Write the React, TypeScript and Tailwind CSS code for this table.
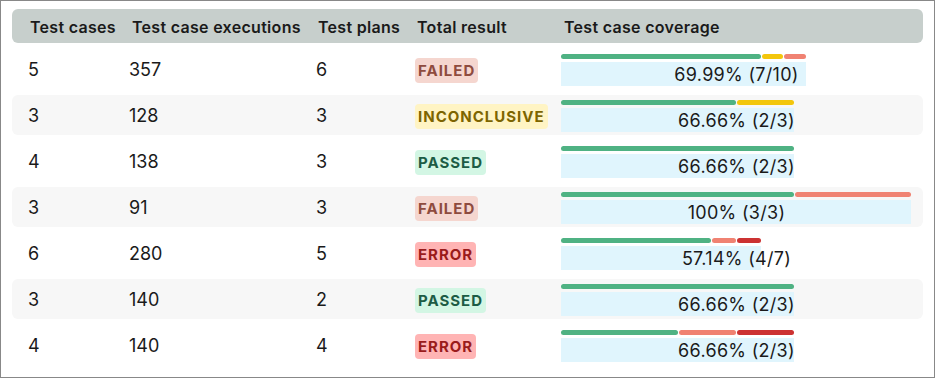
import React from 'react';

type Seg = { c: string; w: number };
type Row = { cases: number; execs: number; plans: number; result: string; pct: string; segs: Seg[] };

const G = 'bg-[#4fb283]';
const Y = 'bg-[#f3c60c]';
const S = 'bg-[#f08272]';
const R = 'bg-[#cc3232]';

const rows: Row[] = [
  { cases: 5, execs: 357, plans: 6, result: 'FAILED', pct: '69.99% (7/10)', segs: [{ c: G, w: 200 }, { c: Y, w: 21 }, { c: S, w: 22 }] },
  { cases: 3, execs: 128, plans: 3, result: 'INCONCLUSIVE', pct: '66.66% (2/3)', segs: [{ c: G, w: 175 }, { c: Y, w: 57 }] },
  { cases: 4, execs: 138, plans: 3, result: 'PASSED', pct: '66.66% (2/3)', segs: [{ c: G, w: 233 }] },
  { cases: 3, execs: 91, plans: 3, result: 'FAILED', pct: '100% (3/3)', segs: [{ c: G, w: 233 }, { c: S, w: 116 }] },
  { cases: 6, execs: 280, plans: 5, result: 'ERROR', pct: '57.14% (4/7)', segs: [{ c: G, w: 150 }, { c: S, w: 24 }, { c: R, w: 24 }] },
  { cases: 3, execs: 140, plans: 2, result: 'PASSED', pct: '66.66% (2/3)', segs: [{ c: G, w: 233 }] },
  { cases: 4, execs: 140, plans: 4, result: 'ERROR', pct: '66.66% (2/3)', segs: [{ c: G, w: 117 }, { c: S, w: 57 }, { c: R, w: 57 }] },
];

const badgeStyles: Record<string, string> = {
  FAILED: 'bg-[#f5d6cf] text-[#8e4b3e]',
  INCONCLUSIVE: 'bg-[#fff4c4] text-[#7d6500]',
  PASSED: 'bg-[#d3f6e4] text-[#1d5c45]',
  ERROR: 'bg-[#ffb4b4] text-[#9a1b1b]',
};

const cols = 'grid grid-cols-[104px_184px_99px_146px_1fr] items-center whitespace-nowrap';

const Coverage: React.FC<{ row: Row }> = ({ row }) => {
  const total = row.segs.reduce((a, s) => a + s.w, 0) + row.segs.length - 1;
  return (
    <div className="flex flex-col gap-[3px] pl-4 pr-[11px] pt-[5px] h-full">
      <div className="flex gap-px h-[5px]">
        {row.segs.map((s, i) => (
          <div key={i} className={`${s.c} h-[5px] rounded-full`} style={{ width: s.w }} />
        ))}
      </div>
      <div className="relative h-[24px]">
        <div className="absolute left-0 top-0 h-[24px] bg-[#e0f5fd]" style={{ width: total }} />
        <div className="relative text-center text-[18px] leading-[25px] tracking-[0.3px] text-[#1a1a1a]">{row.pct}</div>
      </div>
    </div>
  );
};

export default function App() {
  return (
    <div className="w-[935px] h-[378px] border border-[#888888] bg-white px-[11px] pt-[8px] [font-family:Inter,sans-serif] text-[#1a1a1a]">
      <div className={`${cols} h-[34px] rounded-md bg-[#c7cfcc] text-[16px] font-semibold tracking-[0.3px] pt-px`}>
        <div className="pl-[18px]">Test cases</div>
        <div className="pl-[16px]">Test case executions</div>
        <div className="pl-[18px]">Test plans</div>
        <div className="pl-[18px]">Total result</div>
        <div className="pl-[19px]">Test case coverage</div>
      </div>
      <div className="mt-[6px] flex flex-col gap-[6px]">
        {rows.map((r, i) => (
          <div key={i} className={`${cols} h-[40px] rounded-md text-[18px] ${i % 2 === 1 ? 'bg-[#f7f7f7]' : ''}`}>
            <div className="pl-4">{r.cases}</div>
            <div className="pl-[13px]">{r.execs}</div>
            <div className="pl-4">{r.plans}</div>
            <div className="pl-4">
              <span className={`inline-block rounded-[4px] px-[3px] text-[15px] leading-[25px] font-bold tracking-[1px] ${badgeStyles[r.result]}`}>
                {r.result}
              </span>
            </div>
            <div className="h-full">
              <Coverage row={r} />
            </div>
          </div>
        ))}
      </div>
    </div>
  );
}
